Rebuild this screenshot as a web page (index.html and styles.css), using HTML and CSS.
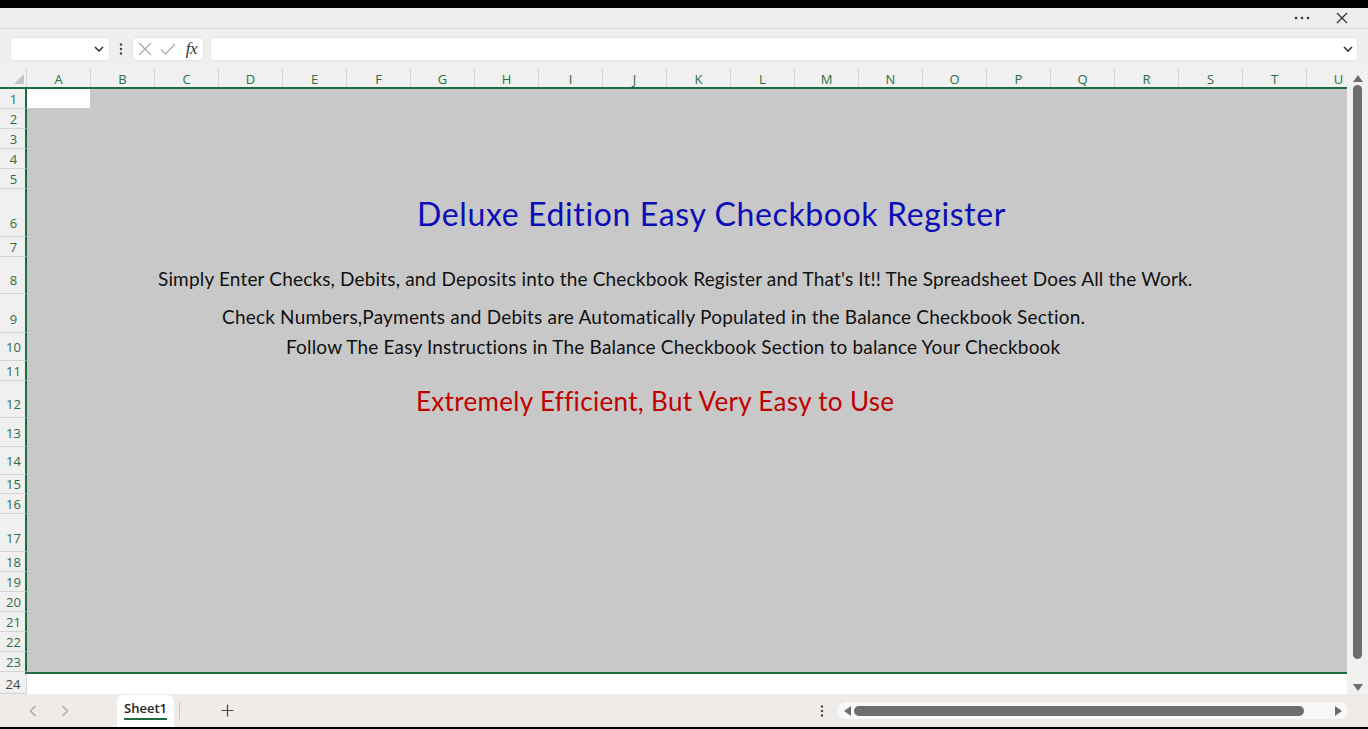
FILE: index.html
```html
<!DOCTYPE html>
<html lang="en">

<head>
	<meta charset="UTF-8">
	<meta name="viewport" content="width=device-width, initial-scale=1.0">
	<title>Deluxe Edition Easy Checkbook Register</title>
	<link rel="stylesheet" href="styles.css">
</head>

<body>
	<div class="app">
		<div class="titlebar">
			<svg class="more" width="16" height="4" viewBox="0 0 16 4"><circle cx="2" cy="2" r="1.3"/><circle cx="8" cy="2" r="1.3"/><circle cx="14" cy="2" r="1.3"/></svg>
			<svg class="close" width="12" height="12" viewBox="0 0 12 12"><path d="M1 1 L11 11 M11 1 L1 11"/></svg>
		</div>

		<div class="formulabar">
			<div class="namebox">
				<svg class="chev" width="10" height="6" viewBox="0 0 10 6"><path d="M1 1 L5 5 L9 1"/></svg>
			</div>
			<div class="vdots">
				<svg width="4" height="12" viewBox="0 0 4 12"><circle cx="2" cy="1.5" r="1.2"/><circle cx="2" cy="6" r="1.2"/><circle cx="2" cy="10.5" r="1.2"/></svg>
			</div>
			<div class="fxbox">
				<span class="slot"><svg width="14" height="14" viewBox="0 0 14 14"><path d="M1 1 L13 13 M13 1 L1 13"/></svg></span>
				<span class="slot"><svg width="16" height="12" viewBox="0 0 16 12"><path d="M1 6.5 L5.5 11 L15 1"/></svg></span>
				<span class="slot fx">fx</span>
			</div>
			<div class="formula">
				<svg class="chev" width="10" height="6" viewBox="0 0 10 6"><path d="M1 1 L5 5 L9 1"/></svg>
			</div>
		</div>

		<div class="main">
			<div class="sheet">
				<div class="colheads">
					<div class="corner"><svg width="12" height="12" viewBox="0 0 12 12"><polygon points="1,11 11,1 11,11"/></svg></div>
					<div class="ch">A</div><div class="ch">B</div><div class="ch">C</div><div class="ch">D</div>
					<div class="ch">E</div><div class="ch">F</div><div class="ch">G</div><div class="ch">H</div>
					<div class="ch">I</div><div class="ch">J</div><div class="ch">K</div><div class="ch">L</div>
					<div class="ch">M</div><div class="ch">N</div><div class="ch">O</div><div class="ch">P</div>
					<div class="ch">Q</div><div class="ch">R</div><div class="ch">S</div><div class="ch">T</div>
					<div class="ch">U</div>
				</div>

				<div class="row h20"><div class="rh">1</div><div class="cells"><div class="active"></div></div></div>
				<div class="row h20"><div class="rh">2</div><div class="cells"></div></div>
				<div class="row h20"><div class="rh">3</div><div class="cells"></div></div>
				<div class="row h20"><div class="rh">4</div><div class="cells"></div></div>
				<div class="row h20"><div class="rh">5</div><div class="cells"></div></div>
				<div class="row h48"><div class="rh tall">6</div><div class="cells"><span class="txt title">Deluxe Edition Easy Checkbook Register</span></div></div>
				<div class="row h20"><div class="rh">7</div><div class="cells"></div></div>
				<div class="row h37"><div class="rh tall">8</div><div class="cells"><span class="txt body l8">Simply Enter Checks, Debits, and Deposits into the Checkbook Register and That's It!! The Spreadsheet Does All the Work.</span></div></div>
				<div class="row h39"><div class="rh tall">9</div><div class="cells"><span class="txt body l9">Check Numbers,Payments and Debits are Automatically Populated in the Balance Checkbook Section.</span></div></div>
				<div class="row h28"><div class="rh tall">10</div><div class="cells"><span class="txt body l10">Follow The Easy Instructions in The Balance Checkbook Section to balance Your Checkbook</span></div></div>
				<div class="row h20"><div class="rh">11</div><div class="cells"></div></div>
				<div class="row h37"><div class="rh tall">12</div><div class="cells"><span class="txt slogan">Extremely Efficient, But Very Easy to Use</span></div></div>
				<div class="row h29"><div class="rh tall">13</div><div class="cells"></div></div>
				<div class="row h28"><div class="rh tall">14</div><div class="cells"></div></div>
				<div class="row h19"><div class="rh">15</div><div class="cells"></div></div>
				<div class="row h20"><div class="rh">16</div><div class="cells"></div></div>
				<div class="row h38"><div class="rh tall">17</div><div class="cells"></div></div>
				<div class="row h20"><div class="rh">18</div><div class="cells"></div></div>
				<div class="row h20"><div class="rh">19</div><div class="cells"></div></div>
				<div class="row h20"><div class="rh">20</div><div class="cells"></div></div>
				<div class="row h20"><div class="rh">21</div><div class="cells"></div></div>
				<div class="row h20"><div class="rh">22</div><div class="cells"></div></div>
				<div class="row h20"><div class="rh">23</div><div class="cells"></div></div>
				<div class="selline"><div class="gap"></div><div class="edge"></div></div>
				<div class="row h20 plain"><div class="rh">24</div><div class="cells"></div></div>
			</div>

			<div class="vscroll">
				<svg class="arrow" width="10" height="7" viewBox="0 0 10 7"><polygon points="5,0 10,7 0,7"/></svg>
				<div class="vthumb"></div>
				<svg class="arrow" width="10" height="7" viewBox="0 0 10 7"><polygon points="0,0 10,0 5,7"/></svg>
			</div>
		</div>

		<div class="tabbar">
			<svg class="nav first" width="8" height="12" viewBox="0 0 8 12"><path d="M6.5 1 L1.5 6 L6.5 11"/></svg>
			<svg class="nav" width="8" height="12" viewBox="0 0 8 12"><path d="M1.5 1 L6.5 6 L1.5 11"/></svg>
			<div class="tab"><span>Sheet1</span></div>
			<div class="sep"></div>
			<svg class="plus" width="13" height="13" viewBox="0 0 13 13"><path d="M6.5 0.5 V12.5 M0.5 6.5 H12.5"/></svg>
			<div class="spacer"></div>
			<svg class="hdots" width="4" height="12" viewBox="0 0 4 12"><circle cx="2" cy="1.5" r="1.2"/><circle cx="2" cy="6" r="1.2"/><circle cx="2" cy="10.5" r="1.2"/></svg>
			<div class="htrack">
				<svg width="7" height="10" viewBox="0 0 7 10"><polygon points="7,0 7,10 0,5"/></svg>
				<div class="hthumb"></div>
				<svg width="7" height="10" viewBox="0 0 7 10"><polygon points="0,0 7,5 0,10"/></svg>
			</div>
		</div>
	</div>
</body>

</html>
```

FILE: styles.css
```css
* {
	margin: 0;
	padding: 0;
	box-sizing: border-box;
}

body {
	width: 1368px;
	height: 729px;
	overflow: hidden;
	background: #000;
	font-family: 'Open Sans', 'Noto Sans', sans-serif;
}

.app {
	margin-top: 8px;
	height: 719px;
	background: #efedeb;
	display: flex;
	flex-direction: column;
}

/* title bar */

.titlebar {
	height: 21px;
	border-bottom: 1px solid #dcdad8;
	display: flex;
	align-items: center;
	justify-content: flex-end;
	padding-right: 20px;
}

.more {
	fill: #333;
	margin-right: 26px;
}

.close {
	stroke: #333;
	stroke-width: 1.3;
	fill: none;
}

/* formula bar */

.formulabar {
	height: 40px;
	display: flex;
	align-items: center;
	padding-left: 10px;
	background: #f1efed;
}

.namebox,
.formula,
.fxbox {
	height: 24px;
	background: white;
	border: 1px solid #e6e4e2;
	border-radius: 4px;
	display: flex;
	align-items: center;
}

.namebox {
	width: 100px;
	justify-content: flex-end;
	padding-right: 5px;
}

.chev {
	fill: none;
	stroke: #333;
	stroke-width: 1.6;
}

.vdots {
	width: 22px;
	display: flex;
	justify-content: center;
	fill: #444;
}

.fxbox {
	width: 72px;
}

.slot {
	width: 24px;
	display: flex;
	justify-content: center;
	align-items: center;
	fill: none;
	stroke: #a8a8a8;
	stroke-width: 1.2;
}

.fx {
	font-family: 'Liberation Serif', serif;
	font-style: italic;
	font-size: 17px;
	color: #333;
	letter-spacing: -0.5px;
}

.formula {
	width: 1148px;
	margin-left: 6px;
	justify-content: flex-end;
	padding-right: 4px;
}

/* sheet */

.main {
	height: 625px;
	display: flex;
	background: #fff;
}

.sheet {
	width: 1347px;
	overflow: hidden;
	display: flex;
	flex-direction: column;
}

.colheads {
	height: 20px;
	display: flex;
	background: #f0f0f0;
	border-bottom: 2px solid #1f6b40;
	flex-shrink: 0;
}

.corner {
	width: 27px;
	flex-shrink: 0;
	border-right: 1px solid #d6d6d6;
	display: flex;
	align-items: flex-end;
	justify-content: flex-end;
	padding: 0 1px 2px 0;
	fill: #c4c4c4;
}

.ch {
	width: 64px;
	flex-shrink: 0;
	border-right: 1px solid #d6d6d6;
	text-align: center;
	font-size: 13px;
	line-height: 18px;
	padding-top: 1px;
	color: #2b6e45;
}

.row {
	display: flex;
	flex-shrink: 0;
}

.h19 { height: 19px; }
.h20 { height: 20px; }
.h28 { height: 28px; }
.h29 { height: 29px; }
.h37 { height: 37px; }
.h38 { height: 38px; }
.h39 { height: 39px; }
.h48 { height: 48px; }

.rh {
	width: 27px;
	flex-shrink: 0;
	background: #f0f0f0;
	border-right: 2px solid #1f6b40;
	border-bottom: 1px solid #d4d4d4;
	display: flex;
	align-items: flex-end;
	justify-content: center;
	font-size: 13px;
	line-height: 18px;
	padding-left: 2px;
	color: #2b6e45;
}

.rh.tall {
	padding-bottom: 4px;
}

.cells {
	flex: 1;
	background: #c8c8c8;
	display: flex;
	align-items: flex-end;
	min-width: 0;
}

.active {
	width: 63px;
	height: 19px;
	align-self: flex-start;
	background: #fff;
}

.selline {
	height: 2px;
	display: flex;
	flex-shrink: 0;
}

.selline .gap {
	width: 25px;
	background: #f0f0f0;
}

.selline .edge {
	flex: 1;
	background: #1f6b40;
}

.plain .rh {
	border-right: 1px solid #d4d4d4;
	color: #444;
	padding-left: 0;
}

.plain .cells {
	background: #fff;
}

.txt {
	font-family: Lato, 'Open Sans', sans-serif;
	white-space: nowrap;
	line-height: 1.2;
	padding-bottom: 3px;
}

.title {
	padding-left: 390px;
	padding-bottom: 4px;
	font-size: 32px;
	letter-spacing: 0.62px;
	color: #0d0db8;
}

.body {
	font-size: 19px;
	letter-spacing: 0.17px;
	color: #111;
}

.l8 { padding-left: 131px; }
.l9 { padding-left: 195px; padding-bottom: 4px; letter-spacing: 0.2px; }
.l10 { padding-left: 259px; padding-bottom: 2px; }

.slogan {
	padding-left: 389px;
	padding-bottom: 1px;
	font-size: 26px;
	letter-spacing: 0.33px;
	color: #c00000;
}

/* scrollbars */

.vscroll {
	width: 21px;
	background: #f3f1ef;
	display: flex;
	flex-direction: column;
	align-items: center;
	padding: 6px 0 3px;
	fill: #6e6e6e;
}

.vthumb {
	width: 9px;
	flex: 1;
	margin: 3px 0 25px;
	background: #6e6e6e;
	border-radius: 5px;
}

/* sheet tabs */

.tabbar {
	height: 33px;
	display: flex;
	align-items: center;
	background: #efebe8;
}

.nav {
	fill: none;
	stroke: #a6a6a6;
	stroke-width: 1.3;
	margin-left: 24px;
}

.nav.first {
	margin-left: 29px;
}

.tab {
	margin-left: 48px;
	width: 57px;
	height: 32px;
	align-self: flex-end;
	background: white;
	border-radius: 6px 6px 0 0;
	display: flex;
	justify-content: center;
	padding-top: 4px;
}

.tab span {
	font-size: 13px;
	font-weight: 600;
	color: #222;
	height: 21px;
	border-bottom: 2px solid #1f6b40;
	line-height: 18px;
}

.sep {
	width: 1px;
	height: 17px;
	background: #c8c6c4;
	margin-left: 5px;
}

.plus {
	margin-left: 41px;
	fill: none;
	stroke: #444;
	stroke-width: 1.2;
}

.spacer {
	flex: 1;
}

.hdots {
	fill: #444;
	margin-right: 14px;
}

.htrack {
	width: 510px;
	height: 17px;
	margin-right: 20px;
	background: #f8f8f8;
	border-radius: 8px;
	display: flex;
	align-items: center;
	padding: 0 6px;
	fill: #6e6e6e;
}

.hthumb {
	width: 450px;
	height: 10px;
	margin-left: 3px;
	background: #6e6e6e;
	border-radius: 5px;
}

.htrack svg:last-child {
	margin-left: auto;
}
```
